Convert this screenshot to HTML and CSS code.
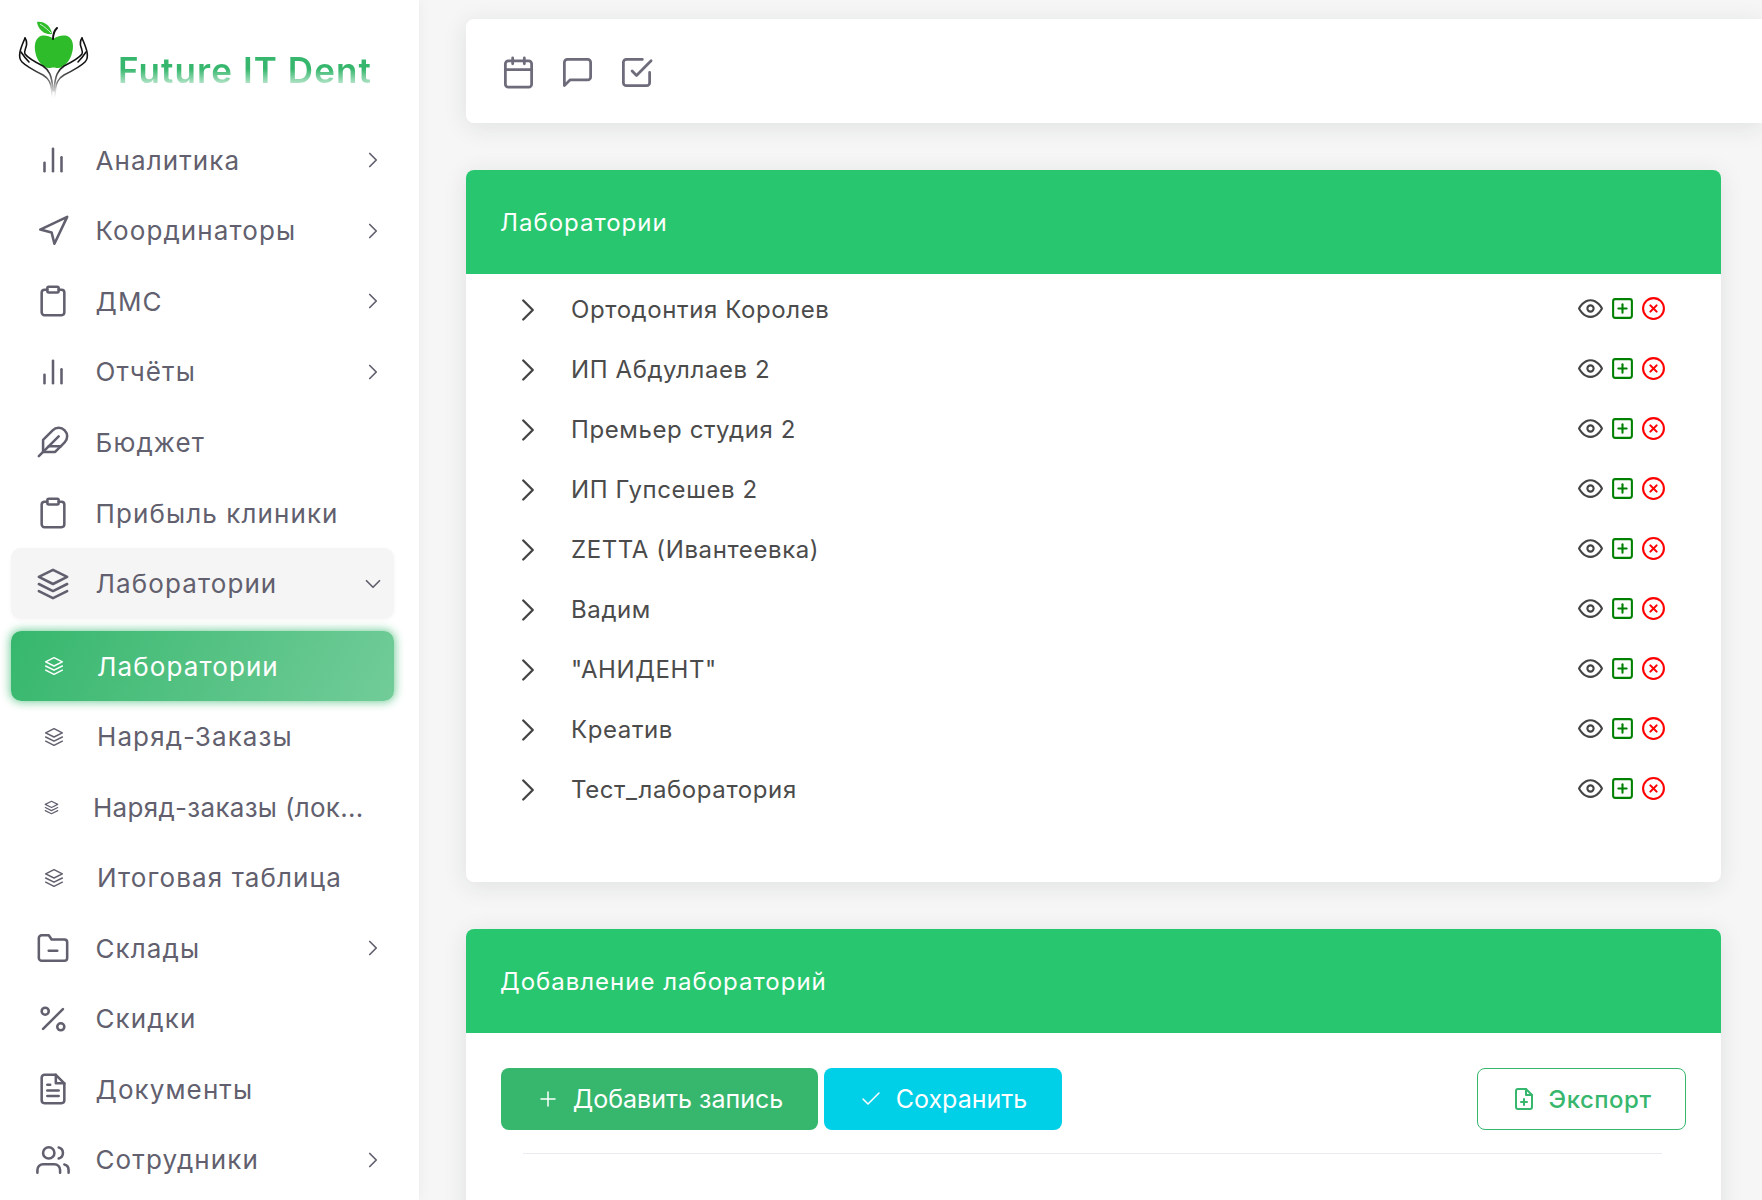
FILE: index.html
```html
<!DOCTYPE html>
<html lang="ru">
<head>
    <meta charset="UTF-8">
    <meta name="viewport" content="width=device-width, initial-scale=1.0">
    <title>Лаборатории</title>
    <link rel="stylesheet" href="styles.css">
</head>
<body>

    <svg class="sprite" xmlns="http://www.w3.org/2000/svg">
        <symbol id="i-bars" viewBox="0 0 24 24"><line x1="18" y1="20" x2="18" y2="10"/><line x1="12" y1="20" x2="12" y2="4"/><line x1="6" y1="20" x2="6" y2="14"/></symbol>
        <symbol id="i-nav" viewBox="0 0 24 24"><polygon points="3 11 22 2 13 21 11 13 3 11"/></symbol>
        <symbol id="i-clipboard" viewBox="0 0 24 24"><path d="M16 4h2a2 2 0 0 1 2 2v14a2 2 0 0 1-2 2H6a2 2 0 0 1-2-2V6a2 2 0 0 1 2-2h2"/><rect x="8" y="2" width="8" height="4" rx="1" ry="1"/></symbol>
        <symbol id="i-feather" viewBox="0 0 24 24"><path d="M20.24 12.24a6 6 0 0 0-8.49-8.49L5 10.5V19h8.5z"/><line x1="16" y1="8" x2="2" y2="22"/><line x1="17.5" y1="15" x2="9" y2="15"/></symbol>
        <symbol id="i-layers" viewBox="0 0 24 24"><polygon points="12 2 2 7 12 12 22 7 12 2"/><polyline points="2 17 12 22 22 17"/><polyline points="2 12 12 17 22 12"/></symbol>
        <symbol id="i-folder" viewBox="0 0 24 24"><path d="M22 19a2 2 0 0 1-2 2H4a2 2 0 0 1-2-2V5a2 2 0 0 1 2-2h5l2 3h9a2 2 0 0 1 2 2z"/><line x1="9" y1="14" x2="15" y2="14"/></symbol>
        <symbol id="i-percent" viewBox="0 0 24 24"><line x1="19" y1="5" x2="5" y2="19"/><circle cx="6.5" cy="6.5" r="2.5"/><circle cx="17.5" cy="17.5" r="2.5"/></symbol>
        <symbol id="i-file" viewBox="0 0 24 24"><path d="M14 2H6a2 2 0 0 0-2 2v16a2 2 0 0 0 2 2h12a2 2 0 0 0 2-2V8z"/><polyline points="14 2 14 8 20 8"/><line x1="16" y1="13" x2="8" y2="13"/><line x1="16" y1="17" x2="8" y2="17"/><polyline points="10 9 9 9 8 9"/></symbol>
        <symbol id="i-users" viewBox="0 0 24 24"><path d="M17 21v-2a4 4 0 0 0-4-4H5a4 4 0 0 0-4 4v2"/><circle cx="9" cy="7" r="4"/><path d="M23 21v-2a4 4 0 0 0-3-3.87"/><path d="M16 3.13a4 4 0 0 1 0 7.75"/></symbol>
        <symbol id="i-right" viewBox="0 0 24 24"><polyline points="9 18 15 12 9 6"/></symbol>
        <symbol id="i-down" viewBox="0 0 24 24"><polyline points="6 9 12 15 18 9"/></symbol>
        <symbol id="i-calendar" viewBox="0 0 24 24"><rect x="3" y="4" width="18" height="18" rx="2" ry="2"/><line x1="16" y1="2" x2="16" y2="6"/><line x1="8" y1="2" x2="8" y2="6"/><line x1="3" y1="10" x2="21" y2="10"/></symbol>
        <symbol id="i-message" viewBox="0 0 24 24"><path d="M21 15a2 2 0 0 1-2 2H7l-4 4V5a2 2 0 0 1 2-2h14a2 2 0 0 1 2 2z"/></symbol>
        <symbol id="i-check-square" viewBox="0 0 24 24"><polyline points="9 11 12 14 22 4"/><path d="M21 12v7a2 2 0 0 1-2 2H5a2 2 0 0 1-2-2V5a2 2 0 0 1 2-2h11"/></symbol>
        <symbol id="i-eye" viewBox="0 0 24 24"><path d="M1 12s4-8 11-8 11 8 11 8-4 8-11 8-11-8-11-8z"/><circle cx="12" cy="12" r="3"/></symbol>
        <symbol id="i-plus-square" viewBox="0 0 24 24"><rect x="3" y="3" width="18" height="18" rx="2" ry="2"/><line x1="12" y1="8" x2="12" y2="16"/><line x1="8" y1="12" x2="16" y2="12"/></symbol>
        <symbol id="i-x-circle" viewBox="0 0 24 24"><circle cx="12" cy="12" r="10"/><line x1="15" y1="9" x2="9" y2="15"/><line x1="9" y1="9" x2="15" y2="15"/></symbol>
        <symbol id="i-plus" viewBox="0 0 24 24"><line x1="12" y1="5" x2="12" y2="19"/><line x1="5" y1="12" x2="19" y2="12"/></symbol>
        <symbol id="i-check" viewBox="0 0 24 24"><polyline points="20 6 9 17 4 12"/></symbol>
        <symbol id="i-file-plus" viewBox="0 0 24 24"><path d="M14 2H6a2 2 0 0 0-2 2v16a2 2 0 0 0 2 2h12a2 2 0 0 0 2-2V8z"/><polyline points="14 2 14 8 20 8"/><line x1="12" y1="18" x2="12" y2="12"/><line x1="9" y1="15" x2="15" y2="15"/></symbol>
    </svg>

    <div id="app">

        <aside id="sidebar">

            <div class="brand">
                <svg class="brand-logo" viewBox="0 0 80 85" xmlns="http://www.w3.org/2000/svg">
                    <defs>
                        <linearGradient id="hand-fade" gradientUnits="userSpaceOnUse" x1="0" y1="50" x2="0" y2="84">
                            <stop offset="0" stop-color="#111"/>
                            <stop offset="0.5" stop-color="#777"/>
                            <stop offset="1" stop-color="#ddd" stop-opacity="0"/>
                        </linearGradient>
                    </defs>
                    <path class="logo-apple" d="M38.5 24C42 21 50 19 54 22C58 25 59 31 57 38C55 46 49 53 43 53C41 53 40 52.5 38.5 52.5C37 52.5 36 53 34 53C28 53 22 46 20.5 38C19 31 20 25 24 22C28 19 35 21 38.5 24z"/>
                    <path class="logo-apple" d="M22 7C29 6 36 11 37 19C30 20 23 15 22 7z"/>
                    <path class="logo-vein" d="M25 9C30 12 33 15 36 18"/>
                    <path class="logo-stem" d="M38 24C38 19 39 16 42 13"/>
                    <g class="logo-hand">
                        <path d="M10 23C8 28 6 32 5 37C4 42 5 45 7 47C12 52 18 55 28 60C33 63 37 67 37 82"/>
                        <path d="M10 23C12 26 12 29 11 32C10 35 9 37 10 39C13 43 20 47 28 51C34 55 37 60 38 76"/>
                        <path d="M6 37C8 40 10 43 14 47"/>
                    </g>
                    <g class="logo-hand" transform="translate(77 0) scale(-1 1)">
                        <path d="M10 23C8 28 6 32 5 37C4 42 5 45 7 47C12 52 18 55 28 60C33 63 37 67 37 82"/>
                        <path d="M10 23C12 26 12 29 11 32C10 35 9 37 10 39C13 43 20 47 28 51C34 55 37 60 38 76"/>
                        <path d="M6 37C8 40 10 43 14 47"/>
                    </g>
                </svg>
                <div class="brand-name">Future IT Dent</div>
            </div>

            <nav>
                <a class="nav-item"><svg class="icon nav-icon"><use href="#i-bars"/></svg><span class="nav-text">Аналитика</span><svg class="icon nav-arrow"><use href="#i-right"/></svg></a>
                <a class="nav-item"><svg class="icon nav-icon"><use href="#i-nav"/></svg><span class="nav-text">Координаторы</span><svg class="icon nav-arrow"><use href="#i-right"/></svg></a>
                <a class="nav-item"><svg class="icon nav-icon"><use href="#i-clipboard"/></svg><span class="nav-text">ДМС</span><svg class="icon nav-arrow"><use href="#i-right"/></svg></a>
                <a class="nav-item"><svg class="icon nav-icon"><use href="#i-bars"/></svg><span class="nav-text">Отчёты</span><svg class="icon nav-arrow"><use href="#i-right"/></svg></a>
                <a class="nav-item"><svg class="icon nav-icon"><use href="#i-feather"/></svg><span class="nav-text">Бюджет</span></a>
                <a class="nav-item"><svg class="icon nav-icon"><use href="#i-clipboard"/></svg><span class="nav-text">Прибыль клиники</span></a>
                <a class="nav-item nav-open"><svg class="icon nav-icon"><use href="#i-layers"/></svg><span class="nav-text">Лаборатории</span><svg class="icon nav-arrow"><use href="#i-down"/></svg></a>
                <a class="nav-item nav-sub nav-active"><svg class="icon nav-icon"><use href="#i-layers"/></svg><span class="nav-text">Лаборатории</span></a>
                <a class="nav-item nav-sub"><svg class="icon nav-icon"><use href="#i-layers"/></svg><span class="nav-text">Наряд-Заказы</span></a>
                <a class="nav-item nav-sub nav-sub-long"><svg class="icon nav-icon"><use href="#i-layers"/></svg><span class="nav-text">Наряд-заказы (лок...</span></a>
                <a class="nav-item nav-sub"><svg class="icon nav-icon"><use href="#i-layers"/></svg><span class="nav-text">Итоговая таблица</span></a>
                <a class="nav-item"><svg class="icon nav-icon"><use href="#i-folder"/></svg><span class="nav-text">Склады</span><svg class="icon nav-arrow"><use href="#i-right"/></svg></a>
                <a class="nav-item"><svg class="icon nav-icon"><use href="#i-percent"/></svg><span class="nav-text">Скидки</span></a>
                <a class="nav-item"><svg class="icon nav-icon"><use href="#i-file"/></svg><span class="nav-text">Документы</span></a>
                <a class="nav-item"><svg class="icon nav-icon"><use href="#i-users"/></svg><span class="nav-text">Сотрудники</span><svg class="icon nav-arrow"><use href="#i-right"/></svg></a>
            </nav>

        </aside>

        <main id="content">

            <div class="topbar">
                <svg class="icon"><use href="#i-calendar"/></svg>
                <svg class="icon"><use href="#i-message"/></svg>
                <svg class="icon"><use href="#i-check-square"/></svg>
            </div>

            <section class="card card-list">
                <div class="card-header">Лаборатории</div>
                <div class="tree">

                    <div class="tree-row">
                        <svg class="icon tree-arrow"><use href="#i-right"/></svg>
                        <span class="tree-title">Ортодонтия Королев</span>
                        <div class="tree-actions">
                            <svg class="icon act-eye"><use href="#i-eye"/></svg>
                            <svg class="icon act-add"><use href="#i-plus-square"/></svg>
                            <svg class="icon act-del"><use href="#i-x-circle"/></svg>
                        </div>
                    </div>

                    <div class="tree-row">
                        <svg class="icon tree-arrow"><use href="#i-right"/></svg>
                        <span class="tree-title">ИП Абдуллаев 2</span>
                        <div class="tree-actions">
                            <svg class="icon act-eye"><use href="#i-eye"/></svg>
                            <svg class="icon act-add"><use href="#i-plus-square"/></svg>
                            <svg class="icon act-del"><use href="#i-x-circle"/></svg>
                        </div>
                    </div>

                    <div class="tree-row">
                        <svg class="icon tree-arrow"><use href="#i-right"/></svg>
                        <span class="tree-title">Премьер студия 2</span>
                        <div class="tree-actions">
                            <svg class="icon act-eye"><use href="#i-eye"/></svg>
                            <svg class="icon act-add"><use href="#i-plus-square"/></svg>
                            <svg class="icon act-del"><use href="#i-x-circle"/></svg>
                        </div>
                    </div>

                    <div class="tree-row">
                        <svg class="icon tree-arrow"><use href="#i-right"/></svg>
                        <span class="tree-title">ИП Гупсешев 2</span>
                        <div class="tree-actions">
                            <svg class="icon act-eye"><use href="#i-eye"/></svg>
                            <svg class="icon act-add"><use href="#i-plus-square"/></svg>
                            <svg class="icon act-del"><use href="#i-x-circle"/></svg>
                        </div>
                    </div>

                    <div class="tree-row">
                        <svg class="icon tree-arrow"><use href="#i-right"/></svg>
                        <span class="tree-title">ZETTA (Ивантеевка)</span>
                        <div class="tree-actions">
                            <svg class="icon act-eye"><use href="#i-eye"/></svg>
                            <svg class="icon act-add"><use href="#i-plus-square"/></svg>
                            <svg class="icon act-del"><use href="#i-x-circle"/></svg>
                        </div>
                    </div>

                    <div class="tree-row">
                        <svg class="icon tree-arrow"><use href="#i-right"/></svg>
                        <span class="tree-title">Вадим</span>
                        <div class="tree-actions">
                            <svg class="icon act-eye"><use href="#i-eye"/></svg>
                            <svg class="icon act-add"><use href="#i-plus-square"/></svg>
                            <svg class="icon act-del"><use href="#i-x-circle"/></svg>
                        </div>
                    </div>

                    <div class="tree-row">
                        <svg class="icon tree-arrow"><use href="#i-right"/></svg>
                        <span class="tree-title">"АНИДЕНТ"</span>
                        <div class="tree-actions">
                            <svg class="icon act-eye"><use href="#i-eye"/></svg>
                            <svg class="icon act-add"><use href="#i-plus-square"/></svg>
                            <svg class="icon act-del"><use href="#i-x-circle"/></svg>
                        </div>
                    </div>

                    <div class="tree-row">
                        <svg class="icon tree-arrow"><use href="#i-right"/></svg>
                        <span class="tree-title">Креатив</span>
                        <div class="tree-actions">
                            <svg class="icon act-eye"><use href="#i-eye"/></svg>
                            <svg class="icon act-add"><use href="#i-plus-square"/></svg>
                            <svg class="icon act-del"><use href="#i-x-circle"/></svg>
                        </div>
                    </div>

                    <div class="tree-row">
                        <svg class="icon tree-arrow"><use href="#i-right"/></svg>
                        <span class="tree-title">Тест_лаборатория</span>
                        <div class="tree-actions">
                            <svg class="icon act-eye"><use href="#i-eye"/></svg>
                            <svg class="icon act-add"><use href="#i-plus-square"/></svg>
                            <svg class="icon act-del"><use href="#i-x-circle"/></svg>
                        </div>
                    </div>

                </div>
            </section>

            <section class="card card-form">
                <div class="card-header">Добавление лабораторий</div>
                <div class="toolbar">
                    <button class="btn btn-add"><svg class="icon"><use href="#i-plus"/></svg>Добавить запись</button>
                    <button class="btn btn-save"><svg class="icon"><use href="#i-check"/></svg>Сохранить</button>
                    <button class="btn btn-export"><svg class="icon"><use href="#i-file-plus"/></svg>Экспорт</button>
                </div>
                <hr class="divider">
            </section>

        </main>

    </div>

</body>
</html>
```

FILE: styles.css
```css
*{
    margin: 0;
    padding: 0;
    box-sizing: border-box;
}

html, body{
    height: 100%;
    overflow: hidden;
}

body{
    font-family: Inter, "Noto Sans", sans-serif;
    background-color: #f6f6f6;
    color: #625f6e;
}

.sprite{
    display: none;
}

.icon{
    fill: none;
    stroke: currentColor;
    stroke-width: 2;
    stroke-linecap: round;
    stroke-linejoin: round;
    flex-shrink: 0;
}

#app{
    display: flex;
    height: 1200px;
}


/* SIDEBAR */

#sidebar{
    width: 419px;
    flex-shrink: 0;
    background-color: #fff;
    box-shadow: 0 0 15px 0 rgba(34, 41, 47, .05);
}

.brand{
    height: 125px;
    display: flex;
    padding: 15px 0 0 15px;
}

.brand-logo{
    width: 80px;
    height: 85px;
    flex-shrink: 0;
}

.logo-apple{
    fill: #2ebc2b;
}

.logo-vein{
    fill: none;
    stroke: #fff;
    stroke-width: .8;
}

.logo-stem{
    fill: none;
    stroke: #111;
    stroke-width: 2;
    stroke-linecap: round;
}

.logo-hand path{
    fill: none;
    stroke: url(#hand-fade);
    stroke-width: 1.6;
    stroke-linecap: round;
}

.brand-name{
    margin: 30px 0 0 23px;
    height: 50px;
    font-size: 35px;
    line-height: 50px;
    font-weight: 600;
    letter-spacing: 1.1px;
    white-space: nowrap;
    background: linear-gradient(180deg, #36b76d 25%, #36b76d 48%, #c9ecd8 82%);
    -webkit-background-clip: text;
    background-clip: text;
    color: transparent;
}

.nav-item{
    display: flex;
    align-items: center;
    height: 70.55px;
    margin: 0 25px 0 11px;
    padding: 0 8px 0 24.5px;
    border-radius: 10px;
    font-size: 26px;
    white-space: nowrap;
}

.nav-icon{
    width: 34px;
    height: 34px;
    stroke-width: 1.8;
    margin-right: 26px;
}

.nav-text{
    flex: 1;
    letter-spacing: 1.1px;
}

.nav-arrow{
    width: 26px;
    height: 26px;
    stroke-width: 1.6;
}

.nav-open{
    background-color: #f5f5f5;
    box-shadow: 0 1px 4px rgba(0, 0, 0, .04);
    margin-bottom: 12px;
}

.nav-sub{
    padding-left: 33px;
    padding-right: 32px;
}

.nav-sub .nav-icon{
    width: 20px;
    height: 20px;
    margin-right: 33px;
}

.nav-sub-long .nav-icon{
    width: 15px;
    height: 15px;
    margin-right: 34px;
}

.nav-sub-long .nav-text{
    letter-spacing: .3px;
}

.nav-active{
    background: linear-gradient(118deg, #36b76d, rgba(54, 183, 109, .7));
    box-shadow: 0 0 10px 1px rgba(54, 183, 109, .7);
    color: #fff;
}


/* CONTENT */

#content{
    flex: 1;
    min-width: 0;
    padding: 19px 0 0 47px;
}

.topbar{
    display: flex;
    align-items: center;
    gap: 24px;
    height: 104px;
    padding-left: 34.5px;
    background-color: #fff;
    border-radius: 8px 0 0 8px;
    box-shadow: 0 4px 24px 0 rgba(34, 41, 47, .1);
    color: #6e6b7b;
}

.topbar .icon{
    width: 35px;
    height: 35px;
    stroke-width: 1.9;
    margin-top: 2px;
}

.card{
    margin-right: 41px;
    background-color: #fff;
    border-radius: 8px;
    box-shadow: 0 4px 24px 0 rgba(34, 41, 47, .1);
}

.card-list{
    margin-top: 47px;
    height: 712px;
}

.card-form{
    margin-top: 47px;
    height: 400px;
}

.card-header{
    height: 104px;
    display: flex;
    align-items: center;
    padding-left: 34px;
    background-color: #28c76f;
    border-radius: 8px 8px 0 0;
    color: #fff;
    font-size: 24px;
    letter-spacing: 1px;
}

.tree{
    padding: 5px 55px 0 43px;
}

.tree-row{
    display: flex;
    align-items: center;
    height: 60px;
}

.tree-arrow{
    width: 38px;
    height: 38px;
    stroke-width: 1.5;
    margin: 2px 24px 0 0;
    color: #444;
}

.tree-title{
    flex: 1;
    font-size: 24px;
    letter-spacing: .6px;
    color: #4b4b4b;
}

.tree-actions{
    display: flex;
    gap: 7px;
    margin-bottom: 2px;
}

.tree-actions .icon{
    width: 25px;
    height: 25px;
}

.act-eye{
    color: #444;
}

.act-add{
    color: #008000;
}

.act-del{
    color: #f00;
    margin-left: -1px;
}

.toolbar{
    display: flex;
    gap: 6px;
    padding: 35px 35px 0;
}

.btn{
    display: flex;
    align-items: center;
    justify-content: center;
    gap: 13px;
    height: 62px;
    border: none;
    border-radius: 8px;
    font-family: Inter, sans-serif;
    font-size: 25px;
    color: #fff;
}

.btn .icon{
    width: 24px;
    height: 24px;
    stroke-width: 1.5;
}

.btn-add{
    width: 317px;
    background-color: #36b76d;
}

.btn-save{
    width: 238px;
    background-color: #00cfe8;
}

.btn-export{
    width: 209px;
    margin-left: auto;
    background-color: #fff;
    border: 1px solid #36b76d;
    color: #36b76d;
    font-size: 24px;
    font-weight: 500;
    letter-spacing: .5px;
}

.btn-export .icon{
    stroke-width: 2;
}

.divider{
    margin: 23px 59px 0 57px;
    border: none;
    border-top: 1px solid #ebe9f1;
}
```
